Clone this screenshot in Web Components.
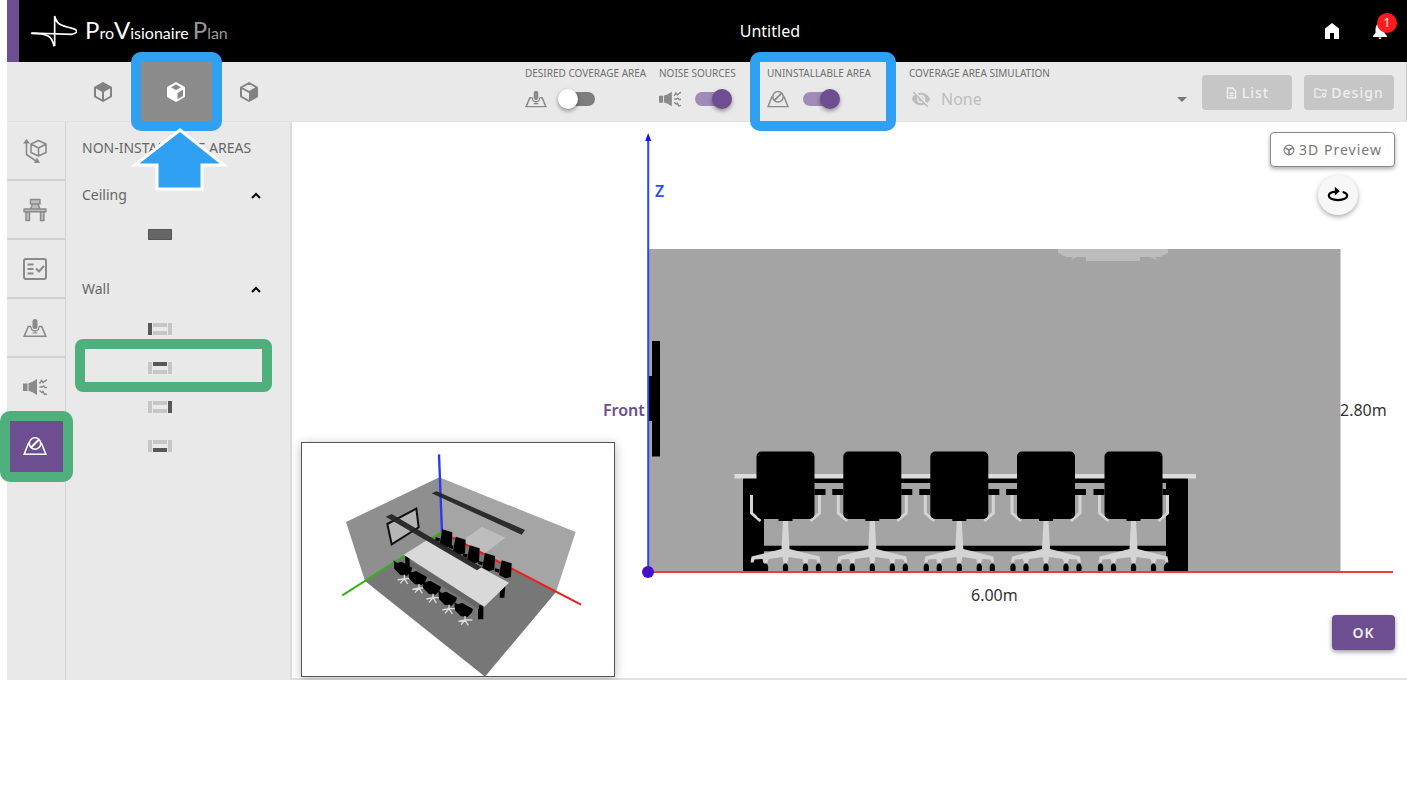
<!DOCTYPE html>
<html lang="en">
<head>
<meta charset="utf-8">
<title>ProVisionaire Plan</title>
<style>
  body { margin: 0; background: #fff; font-family: "Noto Sans", "Open Sans", sans-serif; color: #666; }
</style>
</head>
<body>
<plan-app></plan-app>
<script>
const define = (name, html, setup) => {
  const tpl = document.createElement('template');
  tpl.innerHTML = html;
  customElements.define(name, class extends HTMLElement {
    constructor() {
      super();
      this.attachShadow({ mode: 'open' }).append(tpl.content.cloneNode(true));
    }
    connectedCallback() { if (setup) setup(this, this.shadowRoot); }
  });
};

/* ---------- icons ---------- */
const hex = 'M12 3 20 7.500v9L12 21 4 16.500v-9z';
const mark = (a) => {
  const c = (n) => (n === a ? '#585858' : '#c6c6c6');
  return `<path fill="${c('left')}" d="M0 0h4v12H0z"/><path fill="${c('top')}" d="M5 0h14v4H5z"/>` +
         `<path fill="${c('right')}" d="M20 0h4v12h-4z"/><path fill="${c('bottom')}" d="M5 8h14v4H5z"/>`;
};
const ICONS = {
  cubeTop: ['0 0 24 24', `<path fill="none" stroke="currentColor" stroke-width="2" stroke-linejoin="round" d="${hex}M12 12v9"/><path fill="currentColor" d="M12 2.500 20.500 7.500 12 12.500 3.500 7.500z"/>`],
  cubeFront: ['0 0 24 24', '<path fill="currentColor" stroke="currentColor" stroke-width="2" stroke-linejoin="round" d="M12 3 20 7.500v9L12 21 4 16.500v-9z"/><path fill="#8b8b8b" d="m12 4.500 5 2.800-5 2.800-5-2.800zM13.500 13l5.500-3.200v6.200l-5.500 3.200z"/>'],
  cubeRight: ['0 0 24 24', `<path fill="none" stroke="currentColor" stroke-width="2" stroke-linejoin="round" d="${hex}M4 7.500 12 12l8-4.500"/><path fill="currentColor" d="M12 12l8.500-4.800v9.500L12 21.500z"/>`],
  space: ['0 0 24 24', '<g fill="none" stroke="currentColor" stroke-width="1.600" stroke-linejoin="round"><path d="M15.500 1.500 23 5v8.500L15.500 17 8 13.500V5zM8 5l7.500 4L23 5M15.500 9v8M3.500 3v12.500L13 22"/></g><path fill="currentColor" d="M3.500 0 7 4.500H0zM17 24h-6l3-5.500z"/>'],
  desk: ['0 0 24 24', '<g fill="#bdbdbd" stroke="currentColor" stroke-width="1.400" stroke-linejoin="round"><path d="M7.500 1.500h9.500v4.500H7.500zM9.500 6h5.500l2 5H7.500zM3 14h3.500v8.500H3zM17.500 14H21v8.500h-3.500zM1 11h22v2.800H1z"/></g>'],
  list: ['0 0 24 24', '<rect x="1" y="2" width="22" height="20" rx="2" fill="none" stroke="currentColor" stroke-width="2"/><path fill="none" stroke="currentColor" stroke-width="2" d="M4.500 7.500h6M4.500 12h6M4.500 16.500h6M13 11.500l3 3 5-5.500"/>'],
  coverage: ['0 -3 24 24', '<path fill="none" stroke="currentColor" stroke-width="1.600" d="M8 7.500H5.300L1.200 17.300h21.600L18.700 7.500H16"/><rect x="9.500" y="0" width="5" height="10" rx="2.500" fill="currentColor"/><path fill="none" stroke="currentColor" stroke-width="1.200" d="M8 7.500c0 5.800 8 5.800 8 0M12 11.500v2.500M9.500 14h5"/>'],
  noise: ['0 0 24 22', '<path fill="currentColor" d="M0 7.500h4.500v7.500H0zM5.500 7.200 9 6l5-3v16l-5-3-3.500-1.200z"/><path fill="none" stroke="currentColor" stroke-width="1.500" d="M16.500 7.500l2-3 1.500 2L24 3.500M16.500 11h2.500l1.500-1 1.500 1.500h2M16.500 14.500l2.500 2 1-1 1.500 3 2.500-.5"/>'],
  blocked: ['0 -3 24 24', '<path fill="none" stroke="currentColor" stroke-width="1.600" d="M6.500 5.500C5.500 6 5.300 6.500 5 7.500L1.200 17.300h21.600L19 7.500c-.3-1-.5-1.500-1.500-2"/><circle cx="12" cy="6.500" r="5.700" fill="none" stroke="currentColor" stroke-width="1.600"/><path stroke="currentColor" stroke-width="2" d="m8 10.500 8-8"/>'],
  home: ['0 0 16 16', '<path fill="currentColor" d="M8 0 1 5.500V16h5v-6h4v6h5V5.500z"/>'],
  bell: ['0 0 16 16', '<path fill="currentColor" d="M8 0C5 1 3.500 3 3.500 6v4L1 13v1h14v-1l-2.500-3V6C12.500 3 11 1 8 0zM6.500 14.500h3a1.500 1.500 0 0 1-3 0z"/>'],
  eyeOff: ['0 0 24 24', '<path fill="currentColor" d="M12 7c2.760 0 5 2.240 5 5 0 .65-.13 1.260-.36 1.830l2.920 2.920c1.510-1.260 2.700-2.890 3.430-4.750-1.730-4.390-6-7.500-11-7.500-1.400 0-2.740.25-3.980.7l2.160 2.160C10.740 7.130 11.350 7 12 7zM2 4.270l2.280 2.280.46.46C3.080 8.300 1.780 10.020 1 12c1.730 4.390 6 7.500 11 7.500 1.550 0 3.030-.3 4.380-.84l.42.42L19.730 22 21 20.730 3.270 3 2 4.270zM7.530 9.800l1.550 1.550c-.05.21-.08.43-.08.65 0 1.660 1.340 3 3 3 .22 0 .44-.03.65-.08l1.550 1.550c-.67.33-1.410.53-2.200.53-2.760 0-5-2.240-5-5 0-.79.2-1.530.53-2.200zm4.310-.78 3.150 3.150.02-.16c0-1.660-1.340-3-3-3l-.17.01z"/>'],
  doc: ['0 0 12 12', '<path fill="none" stroke="currentColor" stroke-width="1.400" d="M2 1h5l3 3v7H2zM4 6.200h4M4 8.500h4"/>'],
  folder: ['0 0 14 12', '<path fill="none" stroke="currentColor" stroke-width="1.400" d="M8 10.500H1v-9h4l1.500 1.500H13v2.500"/><circle cx="10.800" cy="8.500" r="1.800" fill="none" stroke="currentColor" stroke-width="1.400"/>'],
  orbit: ['0 0 12 12', '<circle cx="6" cy="6" r="4.900" fill="none" stroke="currentColor" stroke-width="1.100"/><path fill="none" stroke="currentColor" stroke-width="1.500" d="M2.500 4 6 6l3.500-2M6 6v4.500"/>'],
  rotate: ['0 0 24 18', '<path fill="none" stroke="currentColor" stroke-width="2.400" stroke-linecap="round" d="M10 5.300C5 5.500 2 7.300 2 9.800 2 12.500 6 14.500 12 14.500s10-2 10-4.700c0-1.800-1.500-3-4-3.800"/><path fill="currentColor" d="M8.500 0 14 4.800 8.500 9.500z"/>'],
  chevron: ['0 0 10 7', '<path fill="none" stroke="currentColor" stroke-width="2" d="m1 6 4-4 4 4"/>'],
  ceiling: ['0 0 24 12', '<path fill="#666" stroke="#555" d="M.5.5h23v10H.5z"/>'],
  wallLeft: ['0 0 24 12', mark('left')], wallTop: ['0 0 24 12', mark('top')],
  wallRight: ['0 0 24 12', mark('right')], wallBottom: ['0 0 24 12', mark('bottom')],
};
define('ui-icon', `<style>:host{display:block;flex:none;width:24px;height:24px}svg{display:block;width:100%;height:100%}</style><svg aria-hidden="true"></svg>`,
  (el, root) => {
    const [box, body] = ICONS[el.getAttribute('name')];
    const svg = root.querySelector('svg');
    svg.setAttribute('viewBox', box);
    svg.innerHTML = body;
  });

/* ---------- header ---------- */
define('app-header', `<style>
  :host{display:flex;align-items:center;height:62px;background:#000;color:#fff;border-left:12px solid #6c4e91;padding-right:19px}
  .logo{display:flex;align-items:center;gap:8px;padding-left:12px;color:inherit;text-decoration:none}
  .logo svg{width:46px;height:32px}
  .name{font:16px/32px Lato,"Noto Sans",sans-serif;white-space:nowrap}
  .name b{font-weight:400;font-size:24px}
  .name span{color:#999}
  h1{flex:1;margin:0;padding-right:12px;text-align:center;font-size:16px;font-weight:400;line-height:24px}
  nav{display:flex;gap:32px}
  button{position:relative;padding:0;border:0;background:none;color:#fff}
  ui-icon{width:16px;height:16px}
  i{position:absolute;left:5px;top:-10px;width:20px;height:20px;border-radius:50%;background:#fb1d1d;font:12px/20px "Noto Sans",sans-serif;text-align:center}
</style>
<a class="logo" href="#"><svg viewBox="92 44 138 96" fill="none" stroke="#fff" stroke-width="5" aria-hidden="true">
  <path d="M93 98 214 102C236 96 232 88 216 84 190 78 168 75 163 47V137"/><path d="M93 99C138 99 156 106 161 138"/></svg>
  <div class="name"><b>P</b>ro<b>V</b>isionaire <span><b>P</b>lan</span></div></a>
<h1>Untitled</h1>
<nav><button aria-label="Home"><ui-icon name="home"></ui-icon></button>
<button aria-label="Notifications"><ui-icon name="bell"></ui-icon><i>1</i></button></nav>`);

/* ---------- toolbar ---------- */
define('toggle-field', `<style>
  :host{display:block}
  label{display:grid;row-gap:9px;position:relative}
  .cap{font-size:10px;line-height:14px;white-space:nowrap}
  .row{display:flex;align-items:center;gap:11px;height:20px;color:#8a8a8a}
  ui-icon{width:22px;height:22px}
  input{appearance:none;position:relative;width:40px;height:20px;margin:0}
  input::before{content:"";position:absolute;inset:3px;border-radius:7px;background:#7d7d7d}
  input::after{content:"";position:absolute;left:0;top:0;width:20px;height:20px;border-radius:50%;background:#fff;box-shadow:0 2px 4px #0006}
  input:checked::before{background:#a08bb9}
  input:checked::after{left:20px;background:#6c4e91}
  :host([marked]) label::after{content:"";position:absolute;top:-14px;left:-17px;width:126px;height:59px;border:10px solid #30a0f3;border-radius:10px}
</style><label><span class="cap"><slot></slot></span><span class="row"><input type="checkbox" role="switch"></span></label>`,
  (el, root) => {
    const icon = document.createElement('ui-icon');
    icon.setAttribute('name', el.getAttribute('icon'));
    root.querySelector('.row').prepend(icon);
    root.querySelector('input').checked = el.hasAttribute('on');
  });

define('tool-bar', `<style>
  :host{display:flex;position:relative;z-index:2;box-sizing:border-box;height:60px;background:#e9e9e9;border-right:1px solid #ccc;border-bottom:1px solid #e2e2e2;padding:0 12px 0 59px;color:#6f6f6f}
  .views{display:flex;flex:1}
  .views button{position:relative;display:grid;place-items:center;width:73px;padding:0;border:0;background:none;color:#828282}
  .views .on{background:#8b8b8b;color:#fff}
  .views .on::after{content:"";position:absolute;left:-8px;top:-10px;width:71px;height:59px;border:10px solid #30a0f3;border-radius:10px}
  .arrow{position:absolute;z-index:1;left:-8px;top:64px;width:98px;height:66px;pointer-events:none}
  .fields{display:grid;grid-template-columns:134px 108px 142px 285px;padding-top:4px}
  .sim{display:grid;row-gap:9px;align-content:start}
  .sim label{font-size:10px;line-height:14px}
  .row{display:grid;align-items:center;height:20px;color:#bdbdbd}
  .row > *{grid-area:1/1}
  .row ui-icon{width:20px;height:20px;margin-left:2px}
  select{appearance:none;width:100%;height:20px;margin:0;padding:0 0 0 32px;border:0;background:none;color:#bdbdbd;opacity:1;font:16px/20px "Noto Sans",sans-serif}
  .row s{justify-self:end;margin-right:7px;border:5px solid transparent;border-top-color:#777;border-bottom-width:0}
  .acts{display:flex;align-items:center;gap:12px;padding:2px 0 0 8px}
  .acts button{display:flex;align-items:center;justify-content:center;gap:4px;width:90px;height:35px;padding:0;border:0;border-radius:4px;background:#c6c6c6;color:#efefef;font:500 14px/20px "Noto Sans",sans-serif;letter-spacing:1px}
  .acts ui-icon{width:13px;height:12px}
</style>
<div class="views"><button aria-label="Top view"><ui-icon name="cubeTop"></ui-icon></button>
<button class="on" aria-label="Front view"><ui-icon name="cubeFront"></ui-icon>
<svg class="arrow" viewBox="0 0 98 66" aria-hidden="true"><path fill="#30a0f3" stroke="#fff" stroke-width="3" d="M49 4 93 39H71V63H26V39H4z"/></svg></button>
<button aria-label="Side view"><ui-icon name="cubeRight"></ui-icon></button></div>
<div class="fields">
<toggle-field icon="coverage">DESIRED COVERAGE AREA</toggle-field>
<toggle-field icon="noise" on>NOISE SOURCES</toggle-field>
<toggle-field icon="blocked" on marked>UNINSTALLABLE AREA</toggle-field>
<div class="sim"><label for="sim">COVERAGE AREA SIMULATION</label><div class="row"><ui-icon name="eyeOff"></ui-icon><select id="sim" disabled><option>None</option></select><s></s></div></div>
</div>
<div class="acts"><button disabled><ui-icon name="doc"></ui-icon>List</button><button disabled><ui-icon name="folder"></ui-icon>Design</button></div>`);

/* ---------- side rail and panel ---------- */
define('side-rail', `<style>
  :host{display:flex;flex-direction:column;width:58px;background:#e9e9e9;color:#8a8a8a}
  button{position:relative;display:grid;place-items:center;height:59px;padding:0 3px 0 0;border:0;border-bottom:2px solid #d2d2d2;background:none;color:inherit}
  .on{background:#6c4e91;color:#fff;border-color:#6c4e91}
  .on::after{content:"";position:absolute;left:-7px;top:-6px;width:53px;height:51px;border:10px solid #4fb07d;border-radius:10px}
</style>
<button aria-label="Space"><ui-icon name="space"></ui-icon></button>
<button aria-label="Furniture"><ui-icon name="desk"></ui-icon></button>
<button aria-label="Requirements"><ui-icon name="list"></ui-icon></button>
<button aria-label="Coverage area"><ui-icon name="coverage"></ui-icon></button>
<button aria-label="Noise sources"><ui-icon name="noise"></ui-icon></button>
<button class="on" aria-label="Uninstallable area"><ui-icon name="blocked"></ui-icon></button>`);

define('area-group', `<style>
  :host{display:block}
  .head{display:flex;align-items:center;justify-content:space-between;width:100%;height:40px;padding:0 29px 0 16px;border:0;background:none;color:inherit;font:14px/20px "Noto Sans",sans-serif}
  ui-icon{width:10px;height:7px;color:#000}
</style><button class="head" aria-expanded="true"><span></span><ui-icon name="chevron"></ui-icon></button><slot></slot>`,
  (el, root) => { root.querySelector('span').textContent = el.getAttribute('heading'); });

define('area-panel', `<style>
  :host{display:flex;flex-direction:column;box-sizing:border-box;width:227px;background:#e9e9e9;border-left:1px solid #d2d2d2;border-right:2px solid #dcdcdc}
  h2{margin:0;padding:0 0 2px 16px;font-size:14px;font-weight:400;line-height:51px;white-space:nowrap}
  area-group + area-group{margin-top:15px}
  .item{position:relative;display:grid;place-items:center;width:188px;height:39px;padding:0;border:0;background:none}
  .item ui-icon{width:24px;height:12px}
  .marked::after{content:"";position:absolute;left:9px;top:-9px;width:177px;height:33px;border:10px solid #4fb07d;border-radius:8px}
</style><h2>NON-INSTALLABLE AREAS</h2>
<area-group heading="Ceiling"><button class="item" aria-label="Ceiling"><ui-icon name="ceiling"></ui-icon></button></area-group>
<area-group heading="Wall"><button class="item" aria-label="Left wall"><ui-icon name="wallLeft"></ui-icon></button>
<button class="item marked" aria-label="Top wall"><ui-icon name="wallTop"></ui-icon></button>
<button class="item" aria-label="Right wall"><ui-icon name="wallRight"></ui-icon></button>
<button class="item" aria-label="Bottom wall"><ui-icon name="wallBottom"></ui-icon></button></area-group>`);

/* ---------- drawing of the room ---------- */
const chair = (x) => `<g transform="translate(${x})">
  <path d="M-40 489h11v6h-11zM29 489h11v6H29zM-7 517H7v4H-7z"/>
  <g fill="none" stroke="#d4d4d4" stroke-width="3"><path d="M-34 495v18l9 8M34 495v18l-9 8"/></g>
  <rect x="-29" y="451.600" width="58" height="67.400" rx="5"/>
  <path fill="#d4d4d4" d="M-2.500 521h5L4 549l30 7.500 1 6h-3l-1-3-8-.5-1 4h-4l-1-4L3 557l-1 6h-4l-1-6-14 2-1 4h-4l-1-4-8 .5-1 3h-3l1-6L-4 549z"/>
  <ellipse cx="-33" cy="568" rx="2.700" ry="4.500"/><ellipse cx="-20" cy="568" rx="2.700" ry="4.500"/><ellipse cy="568" rx="2.700" ry="4.500"/><ellipse cx="20" cy="568" rx="2.700" ry="4.500"/><ellipse cx="33" cy="568" rx="2.700" ry="4.500"/></g>`;
define('room-view', `<style>:host{display:block}svg{display:block;width:100%;height:auto;font-family:"Noto Sans",sans-serif}</style>
<svg viewBox="292 122 1115 556">
  <path fill="#a4a4a4" d="M648 249h692.500v323H648z"/>
  <path fill="#bcbcbc" d="M1058 249h110v4l-8 4h-5l3 3-6-2-2-1h-10v4h-54v-4h-9l-6 3 2-3h-7l-8-4z"/>
  <path d="M652 341h8v115.500h-8zM648 376h5v45h-5zM743 478h445v5H743zM743 545.700h445v5.600H743zM743 478h21v93h-21zM1166 478h22v93h-22z"/>
  <path fill="#dcdcdc" d="M734.500 474H1196v4.500H734.500z"/>
  ${[785.5, 872.3, 959.3, 1046, 1133.5].map(chair).join('')}
  <path fill="#f23b3b" d="M648 571h745v2H648z"/>
  <path stroke="#2d45fa" stroke-width="2" d="M648.200 140v432"/><path fill="#1017f5" d="m648.200 133 3 8h-6z"/>
  <circle cx="648" cy="572" r="6" fill="#4410c8"/>
  <text x="655" y="197" font-size="16" font-weight="600" fill="#2f4ee8">Z</text>
  <text x="603" y="416" font-size="16" font-weight="600" fill="#6c4e91">Front</text>
  <text x="1340" y="416" font-size="16" fill="#333">2.80m</text>
  <text x="971" y="601" font-size="16" fill="#333">6.00m</text>
</svg>`);

const farChair = (x, y) => `<g transform="translate(${x} ${y})"><path d="M0 0 30 9 28 50 12 54-8 44z"/><path d="M-20 24l14 3-3 10-12-4z"/></g>`;
const nearChair = (x, y) => `<g transform="translate(${x} ${y})"><path d="M-30-25l10 8 14-4 32 18-3 10-13 14-20-2-18-18z"/><path fill="none" stroke="#ddd" stroke-width="4" d="M2 18v14M-18 34 2 30l22 0M2 30-10 44M2 30l10 16"/></g>`;
define('room-preview', `<style>:host{display:block;box-sizing:border-box;width:314px;height:235px;border:1px solid #555;background:#fff;box-shadow:0 2px 10px #0004}svg{display:block;width:100%;height:100%}</style>
<svg viewBox="21 23 936 699" role="img" aria-label="3D room">
  <path fill="#777" d="M210 437 440 290 783 470 570 724z"/>
  <path fill="#8f8f8f" d="M153 260 433 126 440 290 210 437z"/>
  <path fill="#a5a5a5" d="M433 126 842 290 783 470 440 290z"/>
  <path fill="#bdbdbd" d="M560 274 631 307 570 354 500 318z"/>
  <path fill="none" stroke="#34b21a" stroke-width="6" d="M440 290 142 480"/>
  <path fill="none" stroke="#ef1c1c" stroke-width="6" d="M440 290 858 508"/>
  <path fill="none" stroke="#2f35f2" stroke-width="7" d="M441 290 432 57"/>
  <path fill="#b5b5b5" stroke="#111" stroke-width="6" d="M277 266 364 220 371 276 290 327z"/>
  <path fill="#222" fill-opacity=".93" d="M410 174 425 168 690 284 680 298z"/>
  ${[[442, 282], [482, 304], [524, 330], [570, 353], [620, 375]].map((p) => farChair(...p)).join('')}
  <path d="M330 362h14v40h-12zM549 510h16v42h-16zM615 455l17-14-4 46h-14z"/>
  <path fill="#666" d="M345 376 552 500v22L345 392z"/>
  <path fill="#d9d9d9" d="M326 358 400 312 642 442 568 514z"/>
  <path fill="#222" fill-opacity=".93" d="M272 244 290 236 560 396 546 405z"/>
  ${[[326, 400], [370, 428], [412, 457], [460, 490], [508, 524]].map((p) => nearChair(...p)).join('')}
</svg>`);

define('plan-stage', `<style>
  :host{display:grid;flex:1;min-width:0;background:#fff;border-bottom:2px solid #e2e2e2}
  room-view,.over{grid-area:1/1}
  .over{position:relative;display:flex;justify-content:space-between;padding:10px 12px 1px 9px}
  room-preview{align-self:flex-end}
  .side{display:flex;flex-direction:column;align-items:flex-end;padding-bottom:27px}
  button{box-sizing:border-box;display:flex;align-items:center;justify-content:center;gap:4px;padding:0;border-radius:4px;font:14px/20px "Noto Sans",sans-serif;letter-spacing:1px}
  .pre{width:125px;height:35px;border:1px solid #8a8a8a;background:#fff;color:#777;box-shadow:0 2px 4px #0005}
  .pre ui-icon{width:12px;height:12px}
  .turn{width:40px;height:40px;margin:8px 37px 0 0;border:0;border-radius:50%;background:#f7f7f7;color:#000;box-shadow:0 2px 5px #0005}
  .turn ui-icon{width:22px;height:18px}
  .ok{width:63px;height:35px;margin-top:auto;border:0;background:#6c4e91;color:#eee;font-weight:600;box-shadow:0 2px 5px #0006}
</style><room-view></room-view>
<div class="over"><room-preview></room-preview>
<div class="side"><button class="pre"><ui-icon name="orbit"></ui-icon>3D Preview</button>
<button class="turn" aria-label="Rotate"><ui-icon name="rotate"></ui-icon></button>
<button class="ok">OK</button></div></div>`);

define('plan-app', `<style>:host{display:block;padding-left:7px}main{display:flex}side-rail{position:relative;z-index:1}</style>
<app-header></app-header><tool-bar></tool-bar>
<main><side-rail></side-rail><area-panel></area-panel><plan-stage></plan-stage></main>`);
</script>
</body>
</html>
